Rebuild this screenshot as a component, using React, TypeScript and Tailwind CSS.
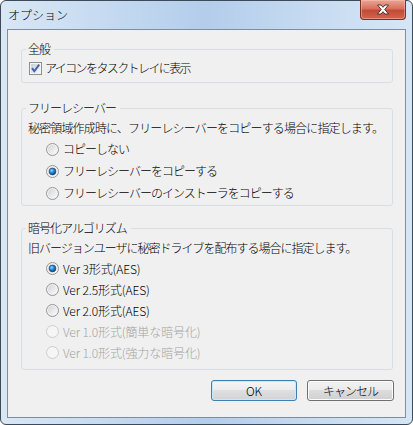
import React from "react"

const font = { fontFamily: '"Noto Sans CJK JP", "Noto Sans", sans-serif' }

function CheckBox() {
  return (
    <svg width="13" height="13" viewBox="0 0 13 13" className="shrink-0">
      <defs>
        <linearGradient id="cbg" x1="0" y1="0" x2="1" y2="1">
          <stop offset="0" stopColor="#cbcfd5" />
          <stop offset="1" stopColor="#f6f6f6" />
        </linearGradient>
      </defs>
      <rect x="0.5" y="0.5" width="12" height="12" fill="#f4f4f4" stroke="#8e8f8f" />
      <rect x="2" y="2" width="9" height="9" fill="url(#cbg)" />
      <path d="M3 6.2 L5.3 9.2 L10.2 2.6" fill="none" stroke="#4060a8" strokeWidth="1.9" />
    </svg>
  )
}

function Radio({ id, checked, disabled }: { id: string; checked?: boolean; disabled?: boolean }) {
  return (
    <svg width="13" height="13" viewBox="0 0 13 13" className="shrink-0">
      <defs>
        <linearGradient id={"rf" + id} x1="0" y1="0" x2="1" y2="1">
          <stop offset="0" stopColor={disabled ? "#f4f4f4" : "#d2d4d7"} />
          <stop offset="1" stopColor={disabled ? "#f7f7f7" : "#fbfbfb"} />
        </linearGradient>
        <radialGradient id={"rd" + id} cx="0.38" cy="0.35" r="0.7">
          <stop offset="0" stopColor="#8fdcff" />
          <stop offset="0.45" stopColor="#2a8ad4" />
          <stop offset="1" stopColor="#0d3a6e" />
        </radialGradient>
      </defs>
      <circle cx="6.5" cy="6.5" r="6" fill={disabled ? "#f4f4f4" : "#f2f2f2"} stroke={disabled ? "#cdcdcd" : "#959595"} />
      <circle cx="6.5" cy="6.5" r="4.5" fill={"url(#rf" + id + ")"} />
      {checked && <circle cx="6.5" cy="6.5" r="3.4" fill={"url(#rd" + id + ")"} stroke="#1b3f6b" strokeWidth="0.6" />}
    </svg>
  )
}

function RadioRow({ id, label, checked, disabled, h, latin }: { id: string; label: string; checked?: boolean; disabled?: boolean; h: string; latin?: boolean }) {
  return (
    <div className={"flex items-center gap-[4px] pl-[24px] " + h}>
      <Radio id={id} checked={checked} disabled={disabled} />
      <span className={(disabled ? "text-[#a3a3a3]" : "text-black") + (latin ? " tracking-[-0.1px]" : "")}>{label}</span>
    </div>
  )
}

function CloseGlyph() {
  return (
    <svg width="14" height="11" viewBox="0 0 14 11">
      <path
        d="M1.5 1 L5 1 L7 3.3 L9 1 L12.5 1 L8.8 5.5 L12.5 10 L9 10 L7 7.7 L5 10 L1.5 10 L5.2 5.5 Z"
        fill="#ffffff"
        stroke="#4a2420"
        strokeWidth="0.9"
        strokeLinejoin="round"
      />
    </svg>
  )
}

export default function App() {
  return (
    <div className="w-[413px] h-[425px] bg-white text-[12px] leading-[18px] tracking-[-1px] font-light" style={font}>
      <div className="w-full h-full flex flex-col rounded-[6px] border border-[#3c4a5a] px-[6px] pb-[6px] bg-[linear-gradient(90deg,#d9e7f5_0%,#c2d8f0_30%,#b3cdeb_50%,#c6dbf1_75%,#d6e6f6_100%)]">

        {/* title bar */}
        <div className="h-[28px] flex items-start justify-between">
          <span className="pl-[1px] pt-[6px] leading-[16px] tracking-normal text-black">オプション</span>
          <div className="-mt-[1px] w-[46px] h-[20px] rounded-b-[4px] border border-t-0 border-[#7a2e24] flex items-center justify-center shadow-[inset_0_0_0_1px_rgba(255,200,190,0.45)] bg-[linear-gradient(180deg,#e9a795_0%,#d8705d_45%,#c24b36_55%,#d2654f_100%)]">
            <CloseGlyph />
          </div>
        </div>

        {/* client */}
        <div className="flex-1 border border-[#7f8d9c] bg-[#f0f0f0] flex flex-col">

          <fieldset className="mt-[10px] ml-[13px] w-[372px] border border-[#d5dfe5] rounded-[3px] pb-[4px]">
            <legend className="ml-[4px] pl-[2px] pr-[4px]">全般</legend>
            <div className="h-[20px] flex items-center gap-[3px] pl-[7px]">
              <CheckBox />
              <span className="tracking-[-1.6px]">アイコンをタスクトレイに表示</span>
            </div>
          </fieldset>

          <fieldset className="mt-[16px] ml-[13px] w-[372px] border border-[#d5dfe5] rounded-[3px] pb-[1px]">
            <legend className="ml-[4px] pl-[2px] pr-[4px]">フリーレシーバー</legend>
            <div className="h-[21px] flex items-center pl-[6px] tracking-[-0.85px]">
              秘密領域作成時に、フリーレシーバーをコピーする場合に指定します。
            </div>
            <RadioRow id="a1" h="h-[22px]" label="コピーしない" />
            <RadioRow id="a2" h="h-[22px]" label="フリーレシーバーをコピーする" checked />
            <RadioRow id="a3" h="h-[22px]" label="フリーレシーバーのインストーラをコピーする" />
          </fieldset>

          <fieldset className="mt-[13px] ml-[13px] w-[372px] border border-[#d5dfe5] rounded-[3px] pb-[6px]">
            <legend className="ml-[4px] pl-[2px] pr-[4px]">暗号化アルゴリズム</legend>
            <div className="h-[21px] flex items-center pl-[6px]">
              旧バージョンユーザに秘密ドライブを配布する場合に指定します。
            </div>
            <RadioRow id="b1" h="h-[21px]" label="Ver 3形式(AES)" checked latin />
            <RadioRow id="b2" h="h-[21px]" label="Ver 2.5形式(AES)" latin />
            <RadioRow id="b3" h="h-[21px]" label="Ver 2.0形式(AES)" latin />
            <RadioRow id="b4" h="h-[21px]" label="Ver 1.0形式(簡単な暗号化)" disabled latin />
            <RadioRow id="b5" h="h-[21px]" label="Ver 1.0形式(強力な暗号化)" disabled latin />
          </fieldset>

          <div className="mt-[10px] mr-[11px] flex justify-end gap-[10px]">
            <button className="w-[86px] h-[21px] rounded-[3px] border border-[#3c7fb1] shadow-[inset_0_0_0_1px_#c4ebfd] bg-[linear-gradient(180deg,#f4f4f4_0%,#ececec_50%,#dfdfdf_50%,#d3d3d3_100%)] text-black tracking-normal leading-[18px]">
              OK
            </button>
            <button className="w-[87px] h-[21px] rounded-[3px] border border-[#707070] shadow-[inset_0_0_0_1px_#fcfcfc] bg-[linear-gradient(180deg,#f2f2f2_0%,#ebebeb_50%,#dddddd_50%,#cfcfcf_100%)] text-black leading-[18px]">
              キャンセル
            </button>
          </div>
        </div>
      </div>
    </div>
  )
}
